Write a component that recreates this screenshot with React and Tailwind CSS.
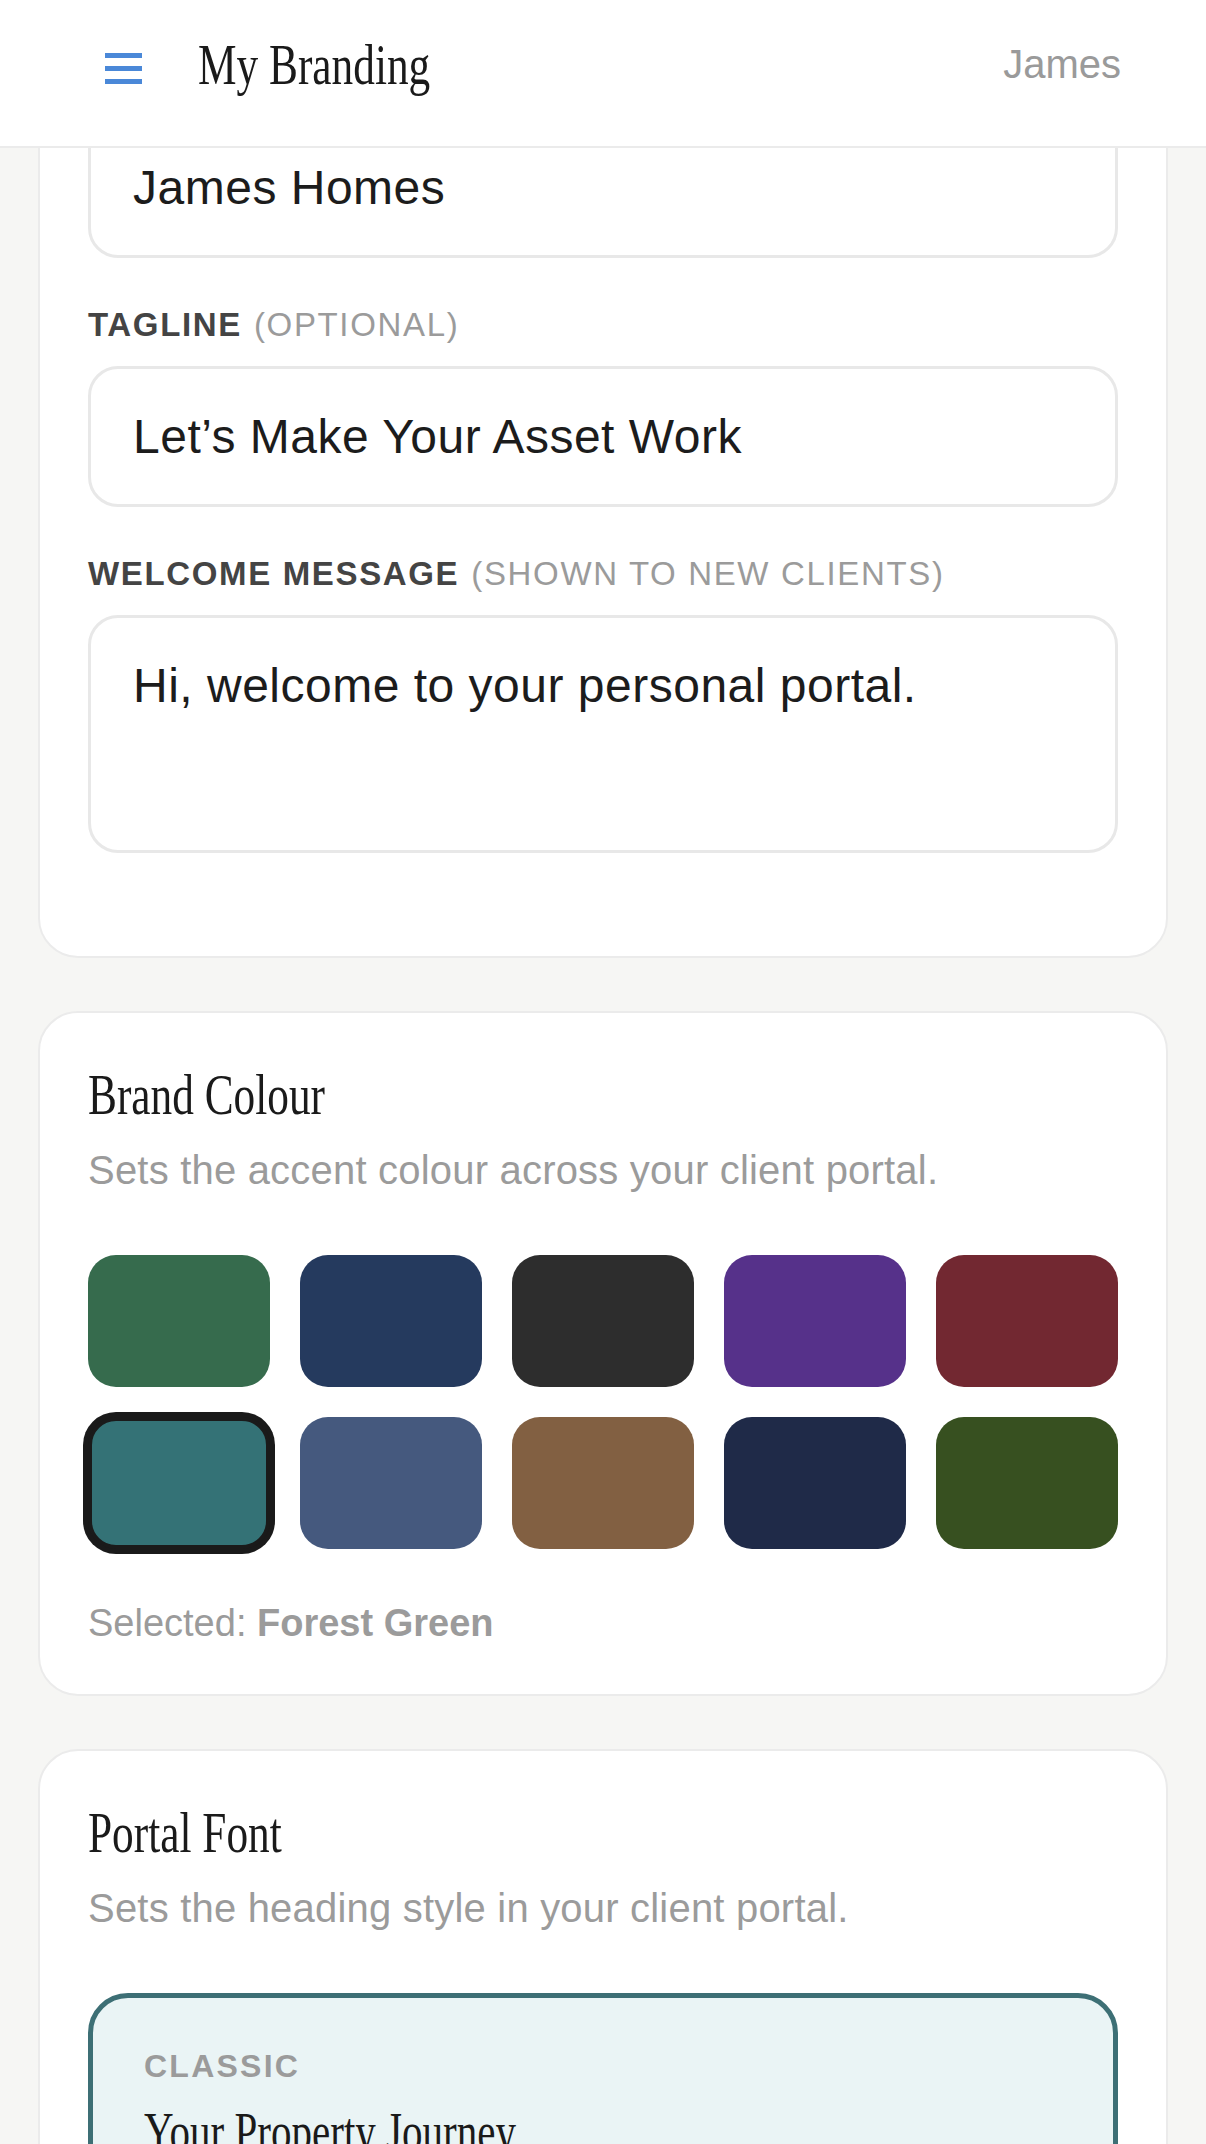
import React from "react";

const swatches = [
  { name: "Forest Green", cls: "bg-[#366b4d]" },
  { name: "Navy", cls: "bg-[#253a5e]" },
  { name: "Charcoal", cls: "bg-[#2d2d2d]" },
  { name: "Royal Purple", cls: "bg-[#56318a]" },
  { name: "Burgundy", cls: "bg-[#722831]" },
  { name: "Teal", cls: "bg-[#347276]" },
  { name: "Slate Blue", cls: "bg-[#45597e]" },
  { name: "Walnut", cls: "bg-[#826042]" },
  { name: "Midnight", cls: "bg-[#1f2a48]" },
  { name: "Olive", cls: "bg-[#375020]" },
];

const Heading = ({ children }) => (
  <h2 className="block w-fit origin-left scale-x-[0.76] font-['Liberation_Serif',serif] text-[57px] leading-[68px] text-[#1a1a1a]">
    {children}
  </h2>
);

const Subtitle = ({ children }) => (
  <p className="mt-[11px] text-[40px] leading-[60px] tracking-[0.2px] text-[#9b9b9b]">{children}</p>
);

const Label = ({ main, hint }) => (
  <div className="mb-[16px] text-[33px] leading-[50px] tracking-[0.05em] font-semibold text-[#444444] uppercase">
    {main}
    {hint && <span className="ml-[12px] font-normal text-[#9b9b9b]">({hint})</span>}
  </div>
);

const Field = ({ value, tall }) => (
  <div
    className={`rounded-[30px] border-[3px] border-[#e8e8e8] bg-white px-[42px] py-[31px] text-[48px] leading-[73px] tracking-[0.5px] text-[#1c1c1c] ${
      tall ? "h-[238px]" : ""
    }`}
  >
    {value}
  </div>
);

const App = () => {
  const selected = 5;

  return (
    <div className="min-h-screen bg-[#f6f6f4] font-['Liberation_Sans',Arial,sans-serif]">
      {/* Top bar */}
      <header className="fixed inset-x-0 top-0 z-10 h-[148px] border-b-2 border-[#ebebeb] bg-white">
        <div className="flex h-[128px] items-center pl-[105px] pr-[85px]">
          <svg width="37" height="31" viewBox="0 0 37 31" className="mt-[9px] shrink-0">
            <rect x="0" y="0" width="37" height="5" fill="#4a88d8" />
            <rect x="0" y="13" width="37" height="5" fill="#4a88d8" />
            <rect x="0" y="26" width="37" height="5" fill="#4a88d8" />
          </svg>
          <span className="ml-[56px] block origin-left scale-x-[0.76] font-['Liberation_Serif',serif] text-[57px] leading-[57px] text-[#1a1a1a]">
            My Branding
          </span>
          <span className="ml-auto text-[40px] leading-[40px] text-[#9a9a9a]">James</span>
        </div>
      </header>

      <main className="flex flex-col gap-[53px] px-[38px] pb-[80px]">
        {/* Business details (scrolled, top sits under the bar) */}
        <section className="-mt-[193px] rounded-[40px] border-2 border-[#ebebeb] bg-white px-[48px] pt-[308px] pb-[103px]">
          <div className="flex flex-col gap-[42px]">
            <Field value="James Homes" />
            <div>
              <Label main="Tagline" hint="Optional" />
              <Field value="Let’s Make Your Asset Work" />
            </div>
            <div>
              <Label main="Welcome Message" hint="Shown to new clients" />
              <Field value="Hi, welcome to your personal portal." tall />
            </div>
          </div>
        </section>

        {/* Brand colour */}
        <section className="rounded-[40px] border-2 border-[#ebebeb] bg-white px-[48px] pt-[48px] pb-[42px]">
          <Heading>Brand Colour</Heading>
          <Subtitle>Sets the accent colour across your client portal.</Subtitle>
          <div className="mt-[55px] grid grid-cols-5 gap-[30px]">
            {swatches.map((s, i) => (
              <button
                key={s.name}
                title={s.name}
                className={`h-[132px] rounded-[28px] ${s.cls} ${
                  i === selected ? "border-[4px] border-[#1a1a1a] shadow-[0_0_0_5px_#1a1a1a]" : ""
                }`}
              />
            ))}
          </div>
          <p className="mt-[46px] text-[38px] leading-[57px] text-[#9b9b9b]">
            Selected: <span className="font-semibold">Forest Green</span>
          </p>
        </section>

        {/* Portal font */}
        <section className="rounded-[40px] border-2 border-[#ebebeb] bg-white px-[48px] pt-[48px] pb-[48px]">
          <Heading>Portal Font</Heading>
          <Subtitle>Sets the heading style in your client portal.</Subtitle>
          <div className="mt-[55px] flex flex-col gap-[30px]">
            <div className="rounded-[40px] border-[5px] border-[#3d6f75] bg-[#eaf4f5] pl-[51px] pr-[40px] pt-[44px] pb-[44px]">
              <div className="text-[32px] leading-[48px] font-bold tracking-[0.07em] text-[#9b9b9b]">CLASSIC</div>
              <div className="mt-[10px] block w-fit origin-left scale-x-[0.76] font-['Liberation_Serif',serif] text-[54px] leading-[65px] text-[#1a1a1a]">
                Your Property Journey
              </div>
            </div>
          </div>
        </section>
      </main>
    </div>
  );
};

export default App;
